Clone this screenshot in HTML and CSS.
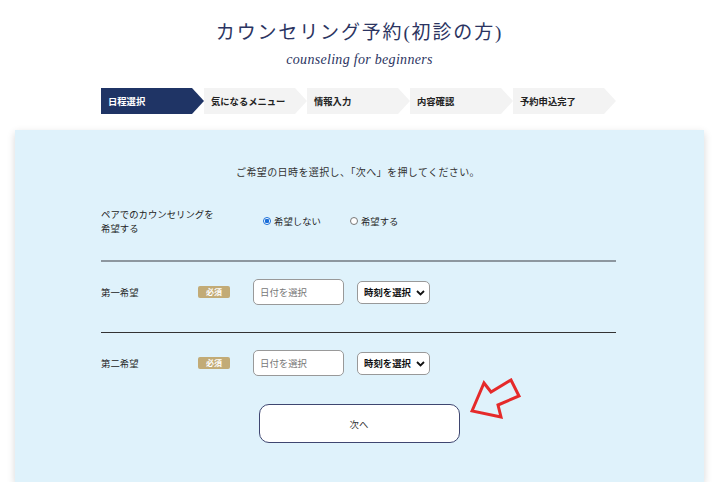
FILE: index.html
```html
<!DOCTYPE html>
<html lang="ja">
<head>
<meta charset="utf-8">
<title>カウンセリング予約</title>
<link rel="stylesheet" href="styles.css">
</head>
<body>
<header class="header">
  <h1 class="title">カウンセリング予約(初診の方)</h1>
  <p class="subtitle">counseling for beginners</p>
  <ol class="steps">
    <li class="step is-current">日程選択</li>
    <li class="step">気になるメニュー</li>
    <li class="step">情報入力</li>
    <li class="step">内容確認</li>
    <li class="step">予約申込完了</li>
  </ol>
</header>
<main class="panel">
  <div class="inner">
    <p class="lead">ご希望の日時を選択し、「次へ」を押してください。</p>
    <div class="pair">
      <div class="pair-label">ペアでのカウンセリングを<br>希望する</div>
      <label class="radio"><input type="radio" name="pair" checked><span>希望しない</span></label>
      <label class="radio"><input type="radio" name="pair"><span>希望する</span></label>
    </div>
    <div class="row row-first">
      <div class="row-label">第一希望</div>
      <span class="badge">必須</span>
      <input class="date" type="text" placeholder="日付を選択">
      <div class="select-wrap">
        <select class="time"><option>時刻を選択</option></select>
        <svg class="chev" width="9" height="6" viewBox="0 0 9 6"><path d="M1 1 L4.5 4.5 L8 1" fill="none" stroke="#111" stroke-width="1.8"/></svg>
      </div>
    </div>
    <div class="row row-second">
      <div class="row-label">第二希望</div>
      <span class="badge">必須</span>
      <input class="date" type="text" placeholder="日付を選択">
      <div class="select-wrap">
        <select class="time"><option>時刻を選択</option></select>
        <svg class="chev" width="9" height="6" viewBox="0 0 9 6"><path d="M1 1 L4.5 4.5 L8 1" fill="none" stroke="#111" stroke-width="1.8"/></svg>
      </div>
    </div>
    <div class="actions">
      <button class="next" type="button">次へ</button>
      <svg class="pointer" width="54" height="42" viewBox="0 0 54 42"><polygon points="2,33 14,5 21,14 41,2 49,18 28,27 31,39" fill="none" stroke="#e52a2a" stroke-width="3" stroke-linejoin="miter"/></svg>
    </div>
  </div>
</main>
</body>
</html>
```

FILE: styles.css
```css
* { box-sizing: border-box; }
html, body { margin: 0; padding: 0; background: #fff; }
body {
  font-family: "Noto Sans CJK JP", "Liberation Sans", sans-serif;
  color: #222;
  font-size: 9.4px;
}
.header { padding-top: 20px; text-align: center; }
.title {
  margin: 0;
  font-family: "Liberation Serif", "Noto Sans CJK JP", serif;
  font-weight: 400;
  font-size: 19px;
  line-height: 26px;
  letter-spacing: 1.85px;
  color: #2b3461;
}
.subtitle {
  margin: 6px 0 0;
  font-family: "Liberation Serif", serif;
  font-style: italic;
  font-size: 14px;
  line-height: 16px;
  letter-spacing: 0.3px;
  color: #2b3461;
}
.steps {
  list-style: none;
  margin: 20px 0 0 101px;
  padding: 0;
  width: 515px;
  display: flex;
  height: 26px;
}
.step {
  width: 103px;
  flex: none;
  height: 26px;
  line-height: 26px;
  padding-left: 7px;
  text-align: left;
  background: #f3f3f3;
  font-size: 9.3px;
  font-weight: 700;
  color: #222;
  clip-path: polygon(0 0, calc(100% - 12px) 0, 100% 50%, calc(100% - 12px) 100%, 0 100%);
}
.step.is-current { background: #1f3465; color: #fff; }
.panel {
  margin: 16px 15px 0;
  height: 352px;
  background: #dff2fb;
  box-shadow: 0 3px 8px rgba(0, 0, 0, 0.16);
}
.inner { width: 515px; margin-left: 86px; padding-top: 34px; }
.lead {
  margin: 0 0 0 135px;
  font-size: 10px;
  line-height: 16px;
  letter-spacing: 0.4px;
  color: #333;
}
.pair {
  margin-top: 27px;
  display: flex;
  align-items: center;
  padding-bottom: 25px;
  border-bottom: 2px solid #8d979f;
}
.pair-label { width: 160px; line-height: 14px; }
.radio { display: flex; align-items: center; }
.radio + .radio { margin-left: 27px; }
.radio input {
  appearance: none;
  -webkit-appearance: none;
  width: 8px;
  height: 8px;
  margin: 0 3px 0 2px;
  border: 1px solid #777;
  border-radius: 50%;
  background: #fff;
}
.radio input:checked {
  border-color: #1a6fd8;
  background: radial-gradient(circle, #1a6fd8 0 2px, #fff 2.5px);
}
.row {
  display: flex;
  align-items: center;
  padding: 17px 0 27px;
}
.row-first { border-bottom: 1px solid #333; }
.row-second { padding-top: 17px; padding-bottom: 28px; }
.row-label { width: 97px; }
.badge {
  width: 32px;
  height: 12px;
  line-height: 12px;
  text-align: center;
  background: #c2ab76;
  color: #fff;
  font-size: 8px;
  font-weight: 700;
  border-radius: 2px;
}
.date {
  margin-left: 23px;
  width: 91px;
  height: 26px;
  padding: 0 6px;
  border: 1px solid #999;
  border-radius: 5px;
  background: #fff;
  font-family: inherit;
  font-size: 9.4px;
  color: #333;
  outline: none;
}
.date::placeholder { color: #777; }
.select-wrap { position: relative; margin-left: 13px; }
.time {
  appearance: none;
  -webkit-appearance: none;
  width: 73px;
  height: 23px;
  padding: 0 0 0 6px;
  border: 1px solid #999;
  border-radius: 5px;
  background: #fff;
  font-family: inherit;
  font-size: 9.4px;
  font-weight: 700;
  color: #111;
}
.chev { position: absolute; right: 5px; top: 9px; pointer-events: none; }
.actions { position: relative; display: flex; justify-content: center; }
.next {
  margin-left: 1px;
  width: 201px;
  height: 39px;
  background: #fff;
  border: 1px solid #3f4670;
  border-radius: 10px;
  font-family: inherit;
  font-size: 9.4px;
  color: #333;
}
.pointer { position: absolute; left: 369px; top: -26px; }
```
